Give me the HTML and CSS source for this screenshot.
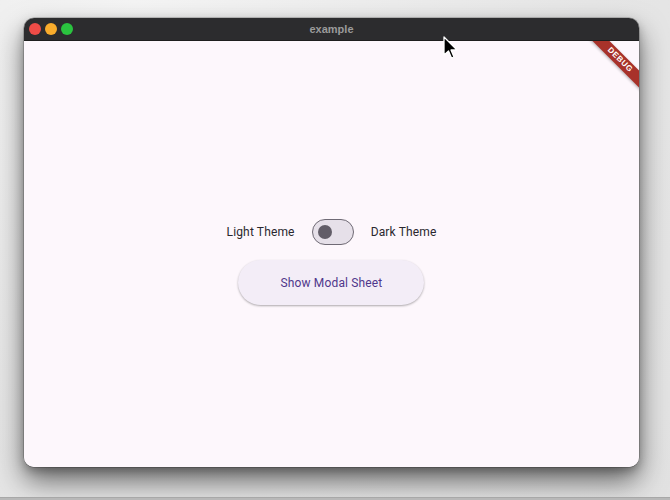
FILE: index.html
```html
<!DOCTYPE html>
<html>
<head>
<meta charset="utf-8">
<link rel="stylesheet" href="styles.css">
</head>
<body>
<div class="desk">
  <div class="window">
    <div class="titlebar">
      <div class="lights">
        <span class="light red"></span>
        <span class="light yellow"></span>
        <span class="light green"></span>
      </div>
      <div class="title">example</div>
    </div>
    <div class="content">
      <div class="group">
        <div class="row">
          <span class="label">Light Theme</span>
          <span class="switch"><span class="thumb"></span></span>
          <span class="label">Dark Theme</span>
        </div>
        <button class="btn">Show Modal Sheet</button>
      </div>
      <div class="banner">DEBUG</div>
    </div>
  </div>
  <svg class="cursor" width="16" height="26" viewBox="0 0 16 26">
    <path d="M1 1 L1 19 L5.5 15 L8.5 22 L11 21 L8 14 L14 14 Z" fill="#000" stroke="#fff" stroke-width="1.3" stroke-linejoin="round"/>
  </svg>
  <div class="floor"></div>
</div>
</body>
</html>
```

FILE: styles.css
```css
html, body {
  margin: 0;
  padding: 0;
}
body {
  width: 670px;
  height: 500px;
  overflow: hidden;
  background: radial-gradient(ellipse at 20% 0%, #f4f4f4 0%, #e6e6e6 60%, #e2e2e2 100%);
  font-family: Roboto, "Noto Sans", sans-serif;
}
.desk {
  position: relative;
  width: 670px;
  height: 500px;
  padding-top: 18px;
  padding-left: 24px;
  box-sizing: border-box;
}
.window {
  width: 615px;
  height: 449px;
  border-radius: 10px;
  overflow: hidden;
  display: flex;
  flex-direction: column;
  box-shadow: 0 0 0 0.5px rgba(0,0,0,0.35), 0 14px 28px rgba(0,0,0,0.55), 0 4px 10px rgba(0,0,0,0.25);
}
.titlebar {
  height: 22px;
  background: #2c2c2e;
  display: flex;
  align-items: center;
  position: relative;
  flex: none;
  border-bottom: 1px solid #1e1e1e;
}
.lights {
  display: flex;
  gap: 4px;
  padding-left: 5px;
}
.light {
  width: 12px;
  height: 12px;
  border-radius: 50%;
  display: block;
}
.red { background: #ee4c47; }
.yellow { background: #f9ac2c; }
.green { background: #2ac33f; }
.title {
  position: absolute;
  left: 0;
  right: 0;
  top: 0;
  bottom: 0;
  text-align: center;
  line-height: 22px;
  font-family: "Liberation Sans", Arial, sans-serif;
  font-weight: bold;
  font-size: 11px;
  color: #9b9b9b;
}
.content {
  flex: 1;
  background: #fdf7fc;
  position: relative;
  overflow: hidden;
  display: flex;
  align-items: center;
  justify-content: center;
}
.group {
  display: flex;
  flex-direction: column;
  align-items: center;
  gap: 15px;
  margin-top: 16px;
}
.row {
  display: flex;
  align-items: center;
  gap: 17px;
}
.label {
  font-size: 12px;
  color: #2a272e;
  letter-spacing: 0.15px;
}
.switch {
  width: 42px;
  height: 26px;
  box-sizing: border-box;
  border: 1.5px solid #6f6a75;
  border-radius: 13px;
  background: #e6e0e9;
  display: flex;
  align-items: center;
  padding-left: 5px;
}
.thumb {
  width: 14px;
  height: 14px;
  border-radius: 50%;
  background: #625d68;
  display: block;
}
.btn {
  width: 186px;
  height: 45px;
  border: none;
  border-radius: 23px;
  background: #f3edf7;
  color: #4f378b;
  font-family: Roboto, "Noto Sans", sans-serif;
  font-size: 12px;
  letter-spacing: 0.15px;
  box-shadow: 0 1px 2px rgba(0,0,0,0.25), 0 1px 3px rgba(0,0,0,0.08);
}
.banner {
  position: absolute;
  top: 13px;
  left: 556px;
  width: 80px;
  height: 12px;
  background: #a8322a;
  color: #fff;
  font-family: "Liberation Sans", Arial, sans-serif;
  font-weight: bold;
  font-size: 8px;
  line-height: 12px;
  text-align: center;
  letter-spacing: 0.6px;
  transform: rotate(45deg);
  box-shadow: 0 1px 3px rgba(0,0,0,0.3);
}
.cursor {
  position: absolute;
  left: 443px;
  top: 36px;
}
.floor {
  position: absolute;
  left: 0;
  right: 0;
  top: 497px;
  height: 3px;
  background: #b8b8b8;
  border-top: 1px solid #a8a8a8;
}
```
